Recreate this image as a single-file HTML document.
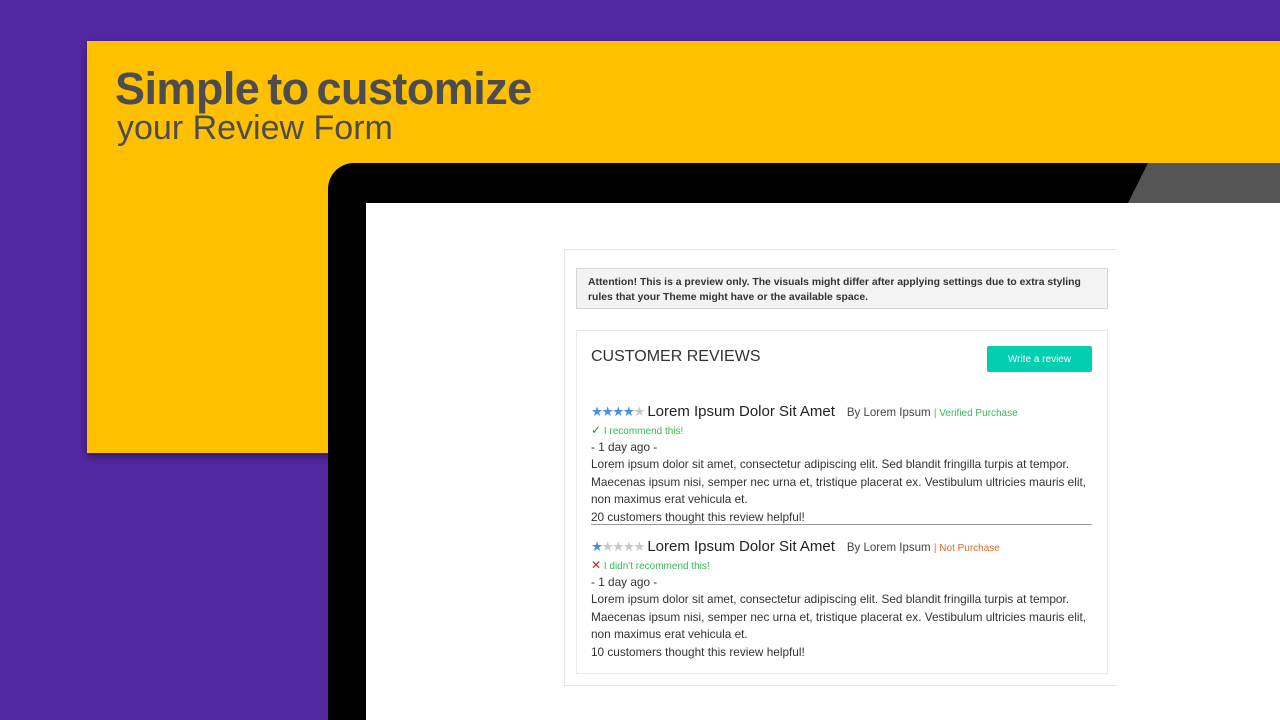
<!DOCTYPE html>
<html><head><style>
*{margin:0;padding:0;box-sizing:border-box}
html,body{width:1280px;height:720px;overflow:hidden}
body{background:#5227a0;position:relative;font-family:"Liberation Sans",sans-serif}
.yel{position:absolute;left:87px;top:41px;width:1193px;height:412px;background:#ffc000;box-shadow:0 4px 8px rgba(0,0,0,.35)}
.t1{position:absolute;left:115px;top:63px;font-size:45px;font-weight:bold;color:#4d4d4f;letter-spacing:-0.55px;word-spacing:-4px;white-space:nowrap}
.t2{position:absolute;left:117px;top:109px;font-size:34px;color:#4d4d4f;white-space:nowrap}
.dev{position:absolute;left:328px;top:163px;width:1000px;height:557px;background:#000;border-radius:26px 0 0 0}
.glare{position:absolute;left:1128px;top:163px;width:200px;height:40px;background:#555;clip-path:polygon(20px 0,100% 0,100% 100%,0 100%)}
.scr{position:absolute;left:366px;top:203px;width:914px;height:517px;background:#fff}
.outer{position:absolute;left:564px;top:249px;width:553px;height:437px;border:1px solid #e4e4e4;border-right:none}
.att{position:absolute;left:576px;top:268px;width:532px;height:41px;background:#f3f3f3;border:1px solid #d6d6d6;font-size:10.4px;font-weight:bold;color:#333;padding:6px 11px;line-height:15px}
.rev{position:absolute;left:576px;top:330px;width:532px;height:344px;border:1px solid #eaeaea}
.h{position:absolute;left:591px;top:348px;font-size:16px;color:#333}
.btn{position:absolute;left:987px;top:346px;width:105px;height:26px;background:#00cfb0;border-radius:2px;color:#fff;font-size:10px;text-align:center;line-height:27px}
.r{position:absolute;left:591px;width:502px;color:#333;font-size:11.8px;line-height:17.5px}
.st{font-size:13.5px;letter-spacing:-1.5px}
.b{color:#4a90e2}.g{color:#c8c8c8}
.tt{font-size:15px;color:#222}
.by{font-size:11.5px;color:#444;margin-left:12px}
.ver{font-size:10px;color:#3cb55a}
.not{font-size:10px;color:#e06a2a}
.rec{font-size:10px;color:#3cb55a;line-height:15px}
hr{position:absolute;left:591px;width:501px;top:524px;border:none;border-top:1px solid #999}
</style></head><body>
<div class="yel"></div>
<div class="t1">Simple to customize</div>
<div class="t2">your Review Form</div>
<div class="dev"></div>
<div class="glare"></div>
<div class="scr"></div>
<div class="outer"></div>
<div class="att">Attention! This is a preview only. The visuals might differ after applying settings due to extra styling rules that your Theme might have or the available space.</div>
<div class="rev"></div>
<div class="h">CUSTOMER REVIEWS</div>
<div class="btn">Write a review</div>
<div class="r" style="top:403px"><span class="st"><span class="b">★★★★</span><span class="g">★</span></span> <span class="tt">Lorem Ipsum Dolor Sit Amet</span><span class="by">By Lorem Ipsum</span> <span class="ver">| Verified Purchase</span><br>
<div class="rec"><span style="color:#1a9a2a;font-size:12px">✓</span> I recommend this!</div>
- 1 day ago -<br>Lorem ipsum dolor sit amet, consectetur adipiscing elit. Sed blandit fringilla turpis at tempor. Maecenas ipsum nisi, semper nec urna et, tristique placerat ex. Vestibulum ultricies mauris elit, non maximus erat vehicula et.<br>20 customers thought this review helpful!</div>
<hr>
<div class="r" style="top:538px"><span class="st"><span class="b">★</span><span class="g">★★★★</span></span> <span class="tt">Lorem Ipsum Dolor Sit Amet</span><span class="by">By Lorem Ipsum</span> <span class="not">| Not Purchase</span><br>
<div class="rec"><span style="color:#e02020;font-size:12px">✕</span> I didn't recommend this!</div>
- 1 day ago -<br>Lorem ipsum dolor sit amet, consectetur adipiscing elit. Sed blandit fringilla turpis at tempor. Maecenas ipsum nisi, semper nec urna et, tristique placerat ex. Vestibulum ultricies mauris elit, non maximus erat vehicula et.<br>10 customers thought this review helpful!</div>
</body></html>
